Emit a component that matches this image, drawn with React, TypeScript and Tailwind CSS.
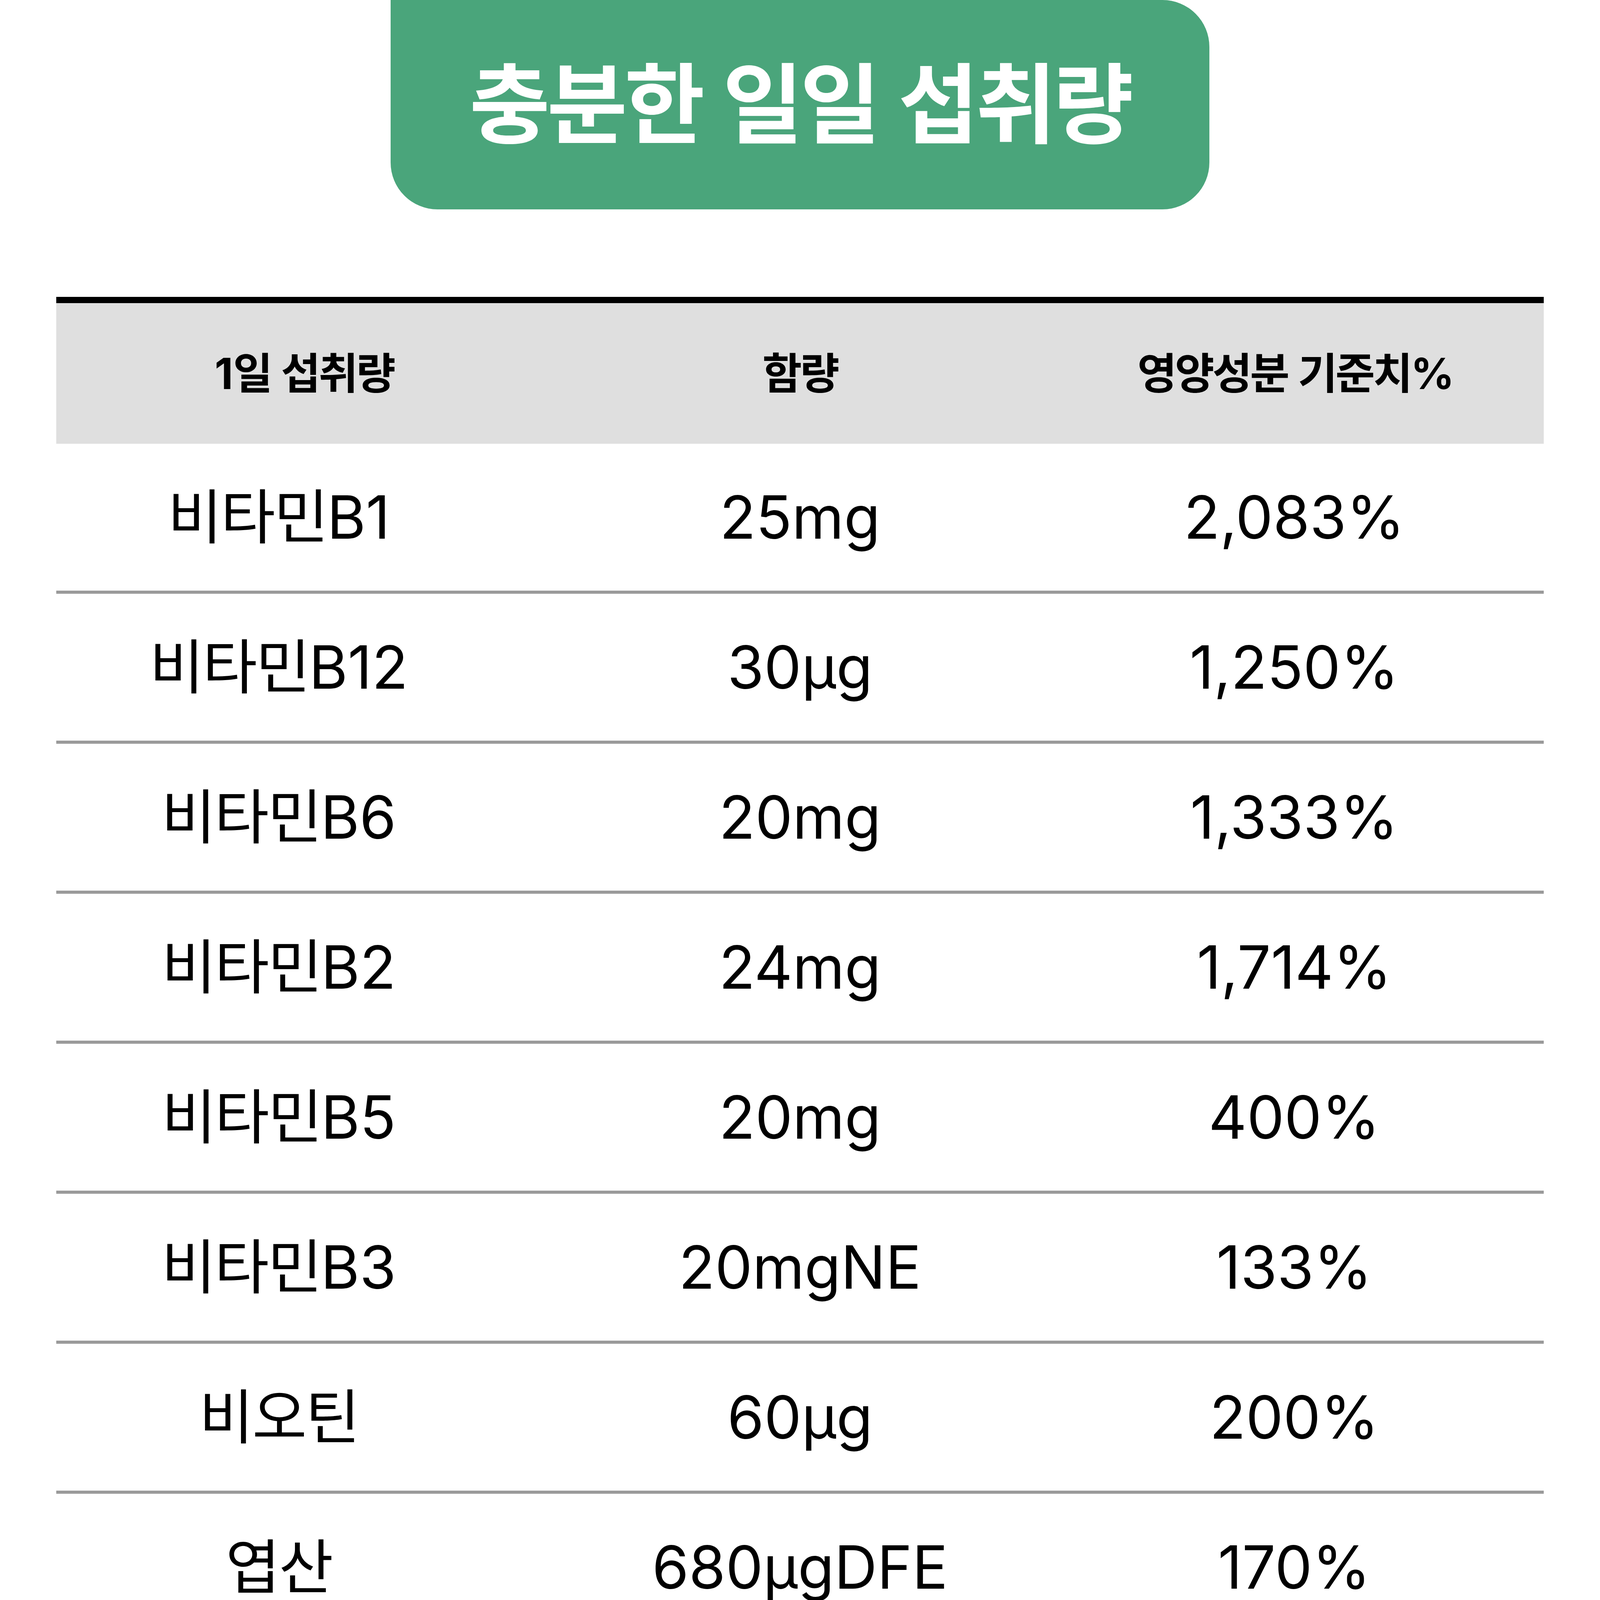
import React from 'react';

const rows = [
  { name: '비타민B1', amount: '25mg', pct: '2,083%' },
  { name: '비타민B12', amount: '30μg', pct: '1,250%' },
  { name: '비타민B6', amount: '20mg', pct: '1,333%' },
  { name: '비타민B2', amount: '24mg', pct: '1,714%' },
  { name: '비타민B5', amount: '20mg', pct: '400%' },
  { name: '비타민B3', amount: '20mgNE', pct: '133%' },
  { name: '비오틴', amount: '60μg', pct: '200%' },
  { name: '엽산', amount: '680μgDFE', pct: '170%' },
  { name: 'L-테아닌', amount: '250mg', pct: '-' },
  { name: '아연', amount: '4.25mg', pct: '50%' },
  { name: '비타민A', amount: '210μgRAE', pct: '30%' },
  { name: '비타민B2', amount: '0.7mg', pct: '50%' },
  { name: '프로폴리스', amount: '20mg', pct: '-' },
  { name: '비타민C', amount: '1,000mg', pct: '1,000%' },
  { name: '라이코펜', amount: '7mg', pct: '-' },
];

// hangul in the reference font runs a bit narrower than Noto, so tighten only those runs
const Txt: React.FC<{ s: string; tight: string }> = ({ s, tight }) => (
  <>
    {s.split(/([가-힣]+)/).map((part, i) =>
      /[가-힣]/.test(part) ? (
        <span key={i} className={tight}>{part}</span>
      ) : (
        <span key={i}>{part}</span>
      )
    )}
  </>
);

const App: React.FC = () => {
  return (
    <div className="min-h-screen w-full bg-white font-['Inter','Noto_Sans_CJK_KR',sans-serif] text-black">
      {/* title badge */}
      <div className="mx-auto flex h-[536px] w-[2096px] items-center justify-center rounded-[0_120px_120px_120px] bg-[#4aa57b]">
        <h1 className="text-[224px] font-bold leading-none text-white">
          <Txt s="충분한 일일 섭취량" tight="tracking-[-0.035em]" />
        </h1>
      </div>

      {/* table */}
      <div className="mx-auto mt-[224px] w-[3808px] border-t-[16px] border-black">
        <div className="grid h-[360px] grid-cols-3 items-center bg-[#dfdfdf] text-center text-[110px] font-bold leading-none">
          <div><Txt s="1일 섭취량" tight="tracking-[-0.045em]" /></div>
          <div><Txt s="함량" tight="tracking-[-0.045em]" /></div>
          <div><Txt s="영양성분 기준치%" tight="tracking-[-0.045em]" /></div>
        </div>
        {rows.map((r, idx) => (
          <div
            key={idx}
            className="grid h-[384px] grid-cols-3 items-center border-b-[8px] border-[#9a9a9a] text-center text-[152px] leading-none"
          >
            <div className="pr-[130px]"><Txt s={r.name} tight="tracking-[-0.025em]" /></div>
            <div>{r.amount}</div>
            <div className="pr-[8px]">{r.pct}</div>
          </div>
        ))}
      </div>
    </div>
  );
};

export default App;
